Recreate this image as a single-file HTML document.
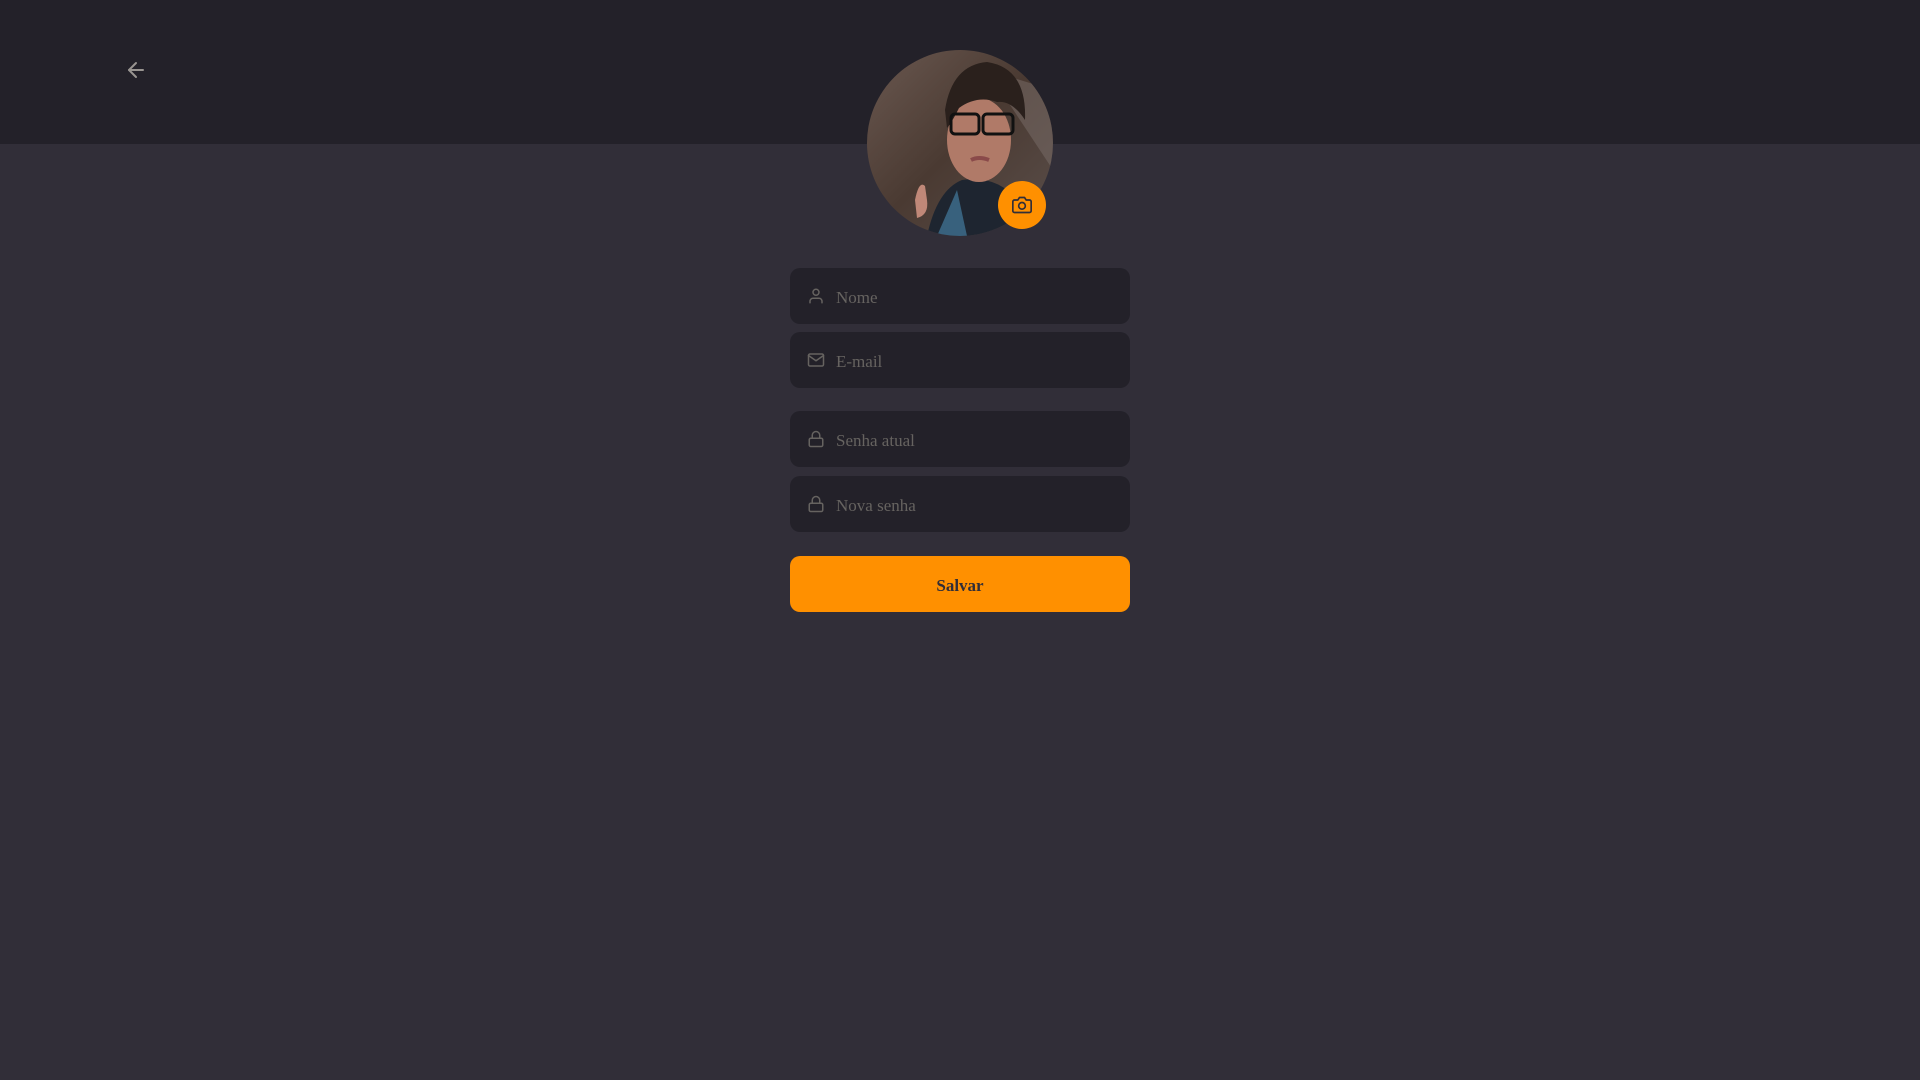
<!DOCTYPE html>
<html><head><meta charset="utf-8"><style>
*{box-sizing:border-box;margin:0;padding:0}
body{width:1920px;height:1080px;background:#312e38;font-family:"Liberation Serif",serif;position:relative;overflow:hidden}
.hdr{position:absolute;left:0;top:0;width:1920px;height:144px;background:#232129}
.back{position:absolute;left:124px;top:58px}
.avatar{position:absolute;left:867px;top:50px;width:186px;height:186px;border-radius:50%;overflow:hidden}
.cam{position:absolute;left:998px;top:181px;width:48px;height:48px;border-radius:50%;background:#ff9000;display:flex;align-items:center;justify-content:center}
.inp{position:absolute;left:790px;width:340px;height:56px;border-radius:10px;background:#232129;display:flex;align-items:center;padding-left:17px;padding-top:4px;color:#666360;font-size:17px}
.inp svg{margin-right:11px;margin-top:-4px}
.btn{position:absolute;left:790px;top:556px;width:340px;height:56px;border-radius:10px;background:#ff9000;color:#312e38;font-size:17px;font-weight:bold;display:flex;align-items:center;justify-content:center;padding-top:3px}
</style></head><body>
<div class="hdr"></div>
<svg class="back" width="24" height="24" viewBox="0 0 24 24" fill="none" stroke="#999591" stroke-width="2" stroke-linecap="round" stroke-linejoin="round"><line x1="19" y1="12" x2="5" y2="12"/><polyline points="12 19 5 12 12 5"/></svg>
<div class="avatar"><svg width="186" height="186" viewBox="0 0 186 186">
<defs><linearGradient id="bg" x1="0" y1="0" x2="1" y2="1"><stop offset="0" stop-color="#6a5850"/><stop offset="0.5" stop-color="#4a3a32"/><stop offset="1" stop-color="#5a4e4a"/></linearGradient></defs>
<rect width="186" height="186" fill="url(#bg)"/>
<path d="M120 20 L186 120 L186 40Z" fill="#7a6e6a" opacity=".5"/>
<path d="M60 186 Q70 140 95 130 Q130 125 150 150 L160 186Z" fill="#1e2530"/>
<path d="M90 140 L100 186 L70 186Z" fill="#4a8ab0" opacity=".6"/>
<ellipse cx="112" cy="90" rx="32" ry="42" fill="#b07a68"/>
<path d="M78 60 Q85 15 120 12 Q160 18 158 70 Q145 50 130 52 Q110 45 92 58 Q85 72 80 78Z" fill="#2a201c"/>
<rect x="84" y="64" width="28" height="20" rx="4" fill="none" stroke="#111" stroke-width="3"/>
<rect x="116" y="64" width="30" height="20" rx="4" fill="none" stroke="#111" stroke-width="3"/>
<path d="M104 110 Q112 106 122 110" stroke="#8a4a4a" stroke-width="4" fill="none"/>
<path d="M48 150 Q52 130 58 136 L60 150 Q62 165 50 168Z" fill="#c08878"/>
</svg></div>
<div class="cam"><svg width="20" height="20" viewBox="0 0 24 24" fill="none" stroke="#312e38" stroke-width="2" stroke-linecap="round" stroke-linejoin="round"><path d="M23 19a2 2 0 0 1-2 2H3a2 2 0 0 1-2-2V8a2 2 0 0 1 2-2h4l2-3h6l2 3h4a2 2 0 0 1 2 2z"/><circle cx="12" cy="13" r="4"/></svg></div>

<div class="inp" style="top:268px"><svg width="18" height="18" viewBox="0 0 24 24" fill="none" stroke="#666360" stroke-width="2" stroke-linecap="round" stroke-linejoin="round"><path d="M20 21v-2a4 4 0 0 0-4-4H8a4 4 0 0 0-4 4v2"/><circle cx="12" cy="7" r="4"/></svg>Nome</div>
<div class="inp" style="top:332px"><svg width="18" height="18" viewBox="0 0 24 24" fill="none" stroke="#666360" stroke-width="2" stroke-linecap="round" stroke-linejoin="round"><path d="M4 4h16c1.1 0 2 .9 2 2v12c0 1.1-.9 2-2 2H4c-1.1 0-2-.9-2-2V6c0-1.1.9-2 2-2z"/><polyline points="22,6 12,13 2,6"/></svg>E-mail</div>
<div class="inp" style="top:411px"><svg width="18" height="18" viewBox="0 0 24 24" fill="none" stroke="#666360" stroke-width="2" stroke-linecap="round" stroke-linejoin="round"><rect x="3" y="11" width="18" height="11" rx="2" ry="2"/><path d="M7 11V7a5 5 0 0 1 10 0v4"/></svg>Senha atual</div>
<div class="inp" style="top:476px"><svg width="18" height="18" viewBox="0 0 24 24" fill="none" stroke="#666360" stroke-width="2" stroke-linecap="round" stroke-linejoin="round"><rect x="3" y="11" width="18" height="11" rx="2" ry="2"/><path d="M7 11V7a5 5 0 0 1 10 0v4"/></svg>Nova senha</div>
<div class="btn">Salvar</div>
</body></html>
